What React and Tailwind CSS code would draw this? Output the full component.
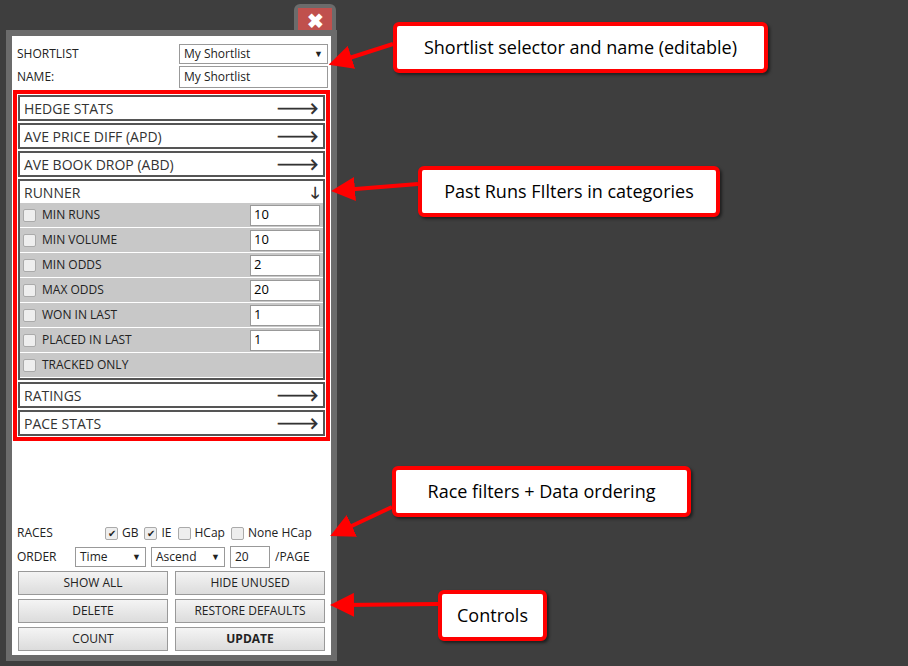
import React from 'react';

const Arrow = ({ d }) => (
  <svg className="absolute left-0 top-0 pointer-events-none" width="908" height="666">
    <defs>
      <marker id="ah" markerWidth="6" markerHeight="6" refX="3" refY="3" orient="auto">
        <path d="M0,0 L6,3 L0,6 z" fill="#ff0000" />
      </marker>
    </defs>
    {d.map((l, i) => (
      <line key={i} x1={l[0]} y1={l[1]} x2={l[2]} y2={l[3]} stroke="#ff0000" strokeWidth="4" markerEnd="url(#ah)" />
    ))}
  </svg>
);

const Callout = ({ cls, children }) => (
  <div className={`absolute bg-white border-4 border-[#ff0000] rounded-md flex items-center justify-center text-[18px] text-black shadow-[2px_2px_3px_rgba(0,0,0,0.5)] ${cls}`}>
    {children}
  </div>
);

const Header = ({ title, down }) => (
  <div className="h-[26px] border-2 border-[#555] bg-white flex items-center justify-between px-1 text-[14px] text-[#333]">
    <span>{title}</span>
    <span className="text-[16px] font-bold leading-none">{down ? '🡓' : '🡒'}</span>
  </div>
);

const Box = ({ checked }) => (
  <span className={`inline-flex items-center justify-center w-[13px] h-[13px] rounded-[2px] border border-[#aaa] bg-[#eee] text-[10px] leading-none`}>
    {checked ? '✔' : ''}
  </span>
);

const runner = [
  ['MIN RUNS', '10'], ['MIN VOLUME', '10'], ['MIN ODDS', '2'], ['MAX ODDS', '20'],
  ['WON IN LAST', '1'], ['PLACED IN LAST', '1'], ['TRACKED ONLY', null],
];

const Btn = ({ children, bold }) => (
  <div className={`h-[24px] border border-[#999] bg-gradient-to-b from-[#f4f4f4] to-[#dcdcdc] flex items-center justify-center text-[12px] text-[#222] ${bold ? 'font-bold' : ''}`}>{children}</div>
);

export default function App() {
  return (
    <div className="relative w-[908px] h-[666px] bg-[#3e3e3e] overflow-hidden" style={{ fontFamily: '"Open Sans", sans-serif' }}>
      <div className="absolute left-[294px] top-[4px] w-[42px] h-[34px] bg-[#6b6b6b] rounded-t-md flex justify-center pt-[4px]">
        <div className="w-[34px] h-[25px] bg-[#c0504d] flex items-center justify-center text-white text-[20px] font-bold leading-none">✖</div>
      </div>
      <div className="absolute left-[6px] top-[30px] w-[331px] h-[631px] bg-[#6b6b6b] p-[6px]">
        <div className="bg-white h-full px-[3px] pt-[7px] flex flex-col text-[12px] text-[#222]">
          <div className="flex items-center justify-between h-[22px] pl-[2px]">
            <span>SHORTLIST</span>
            <div className="w-[149px] h-[20px] border border-[#999] flex items-center justify-between px-1 text-[12px]">
              <span>My Shortlist</span><span className="text-[9px]">▼</span>
            </div>
          </div>
          <div className="flex items-center justify-between h-[24px] pl-[2px]">
            <span>NAME:</span>
            <div className="w-[149px] h-[22px] border border-[#999] flex items-center px-1">My Shortlist</div>
          </div>
          <div className="border-4 border-[#ff0000] -mx-[2px] p-[1px] flex flex-col gap-[2px] mt-[1px]">
            <Header title="HEDGE STATS" />
            <Header title="AVE PRICE DIFF (APD)" />
            <Header title="AVE BOOK DROP (ABD)" />
            <div className="border-2 border-[#555]">
              <div className="h-[22px] bg-white flex items-center justify-between px-1 text-[14px] text-[#333]">
                <span>RUNNER</span><span className="text-[16px] font-bold leading-none">🡓</span>
              </div>
              <div className="bg-[#c8c8c8]">
                {runner.map(([l, v]) => (
                  <div key={l} className="h-[25px] flex items-center border-b border-white px-[3px] gap-[6px]">
                    <Box />
                    <span className="flex-1">{l}</span>
                    {v && <div className="w-[70px] h-[21px] bg-white border border-[#999] flex items-center px-[3px] text-[13px] text-black">{v}</div>}
                  </div>
                ))}
              </div>
            </div>
            <Header title="RATINGS" />
            <Header title="PACE STATS" />
          </div>
          <div className="flex-1" />
          <div className="flex items-center h-[22px] pl-[2px]">
            <span className="w-[88px]">RACES</span>
            <span className="flex items-center gap-1"><Box checked /> GB</span>
            <span className="flex items-center gap-1 ml-[6px]"><Box checked /> IE</span>
            <span className="flex items-center gap-1 ml-[6px]"><Box /> HCap</span>
            <span className="flex items-center gap-1 ml-[6px]"><Box /> None HCap</span>
          </div>
          <div className="flex items-center h-[26px] pl-[2px] gap-[5px]">
            <span className="w-[53px]">ORDER</span>
            <div className="w-[71px] h-[20px] border border-[#999] flex items-center justify-between px-1"><span>Time</span><span className="text-[9px]">▼</span></div>
            <div className="w-[74px] h-[20px] border border-[#999] flex items-center justify-between px-1"><span>Ascend</span><span className="text-[9px]">▼</span></div>
            <div className="w-[40px] h-[22px] border border-[#999] flex items-center px-1">20</div>
            <span>/PAGE</span>
          </div>
          <div className="grid grid-cols-2 gap-x-[7px] gap-y-[4px] px-[3px] mt-[1px]">
            <Btn>SHOW ALL</Btn><Btn>HIDE UNUSED</Btn>
            <Btn>DELETE</Btn><Btn>RESTORE DEFAULTS</Btn>
            <Btn>COUNT</Btn><Btn bold>UPDATE</Btn>
          </div>
          <div className="h-[4px]" />
        </div>
      </div>

      <Arrow d={[[393, 44, 340, 61], [418, 184, 343, 190], [392, 507, 341, 531], [438, 604, 342, 605]]} />
      <Callout cls="left-[393px] top-[22px] w-[375px] h-[51px]">Shortlist selector and name (editable)</Callout>
      <Callout cls="left-[418px] top-[166px] w-[302px] h-[51px]">Past Runs FIlters in categories</Callout>
      <Callout cls="left-[392px] top-[466px] w-[299px] h-[51px]">Race filters + Data ordering</Callout>
      <Callout cls="left-[438px] top-[590px] w-[109px] h-[51px]">Controls</Callout>
    </div>
  );
}
